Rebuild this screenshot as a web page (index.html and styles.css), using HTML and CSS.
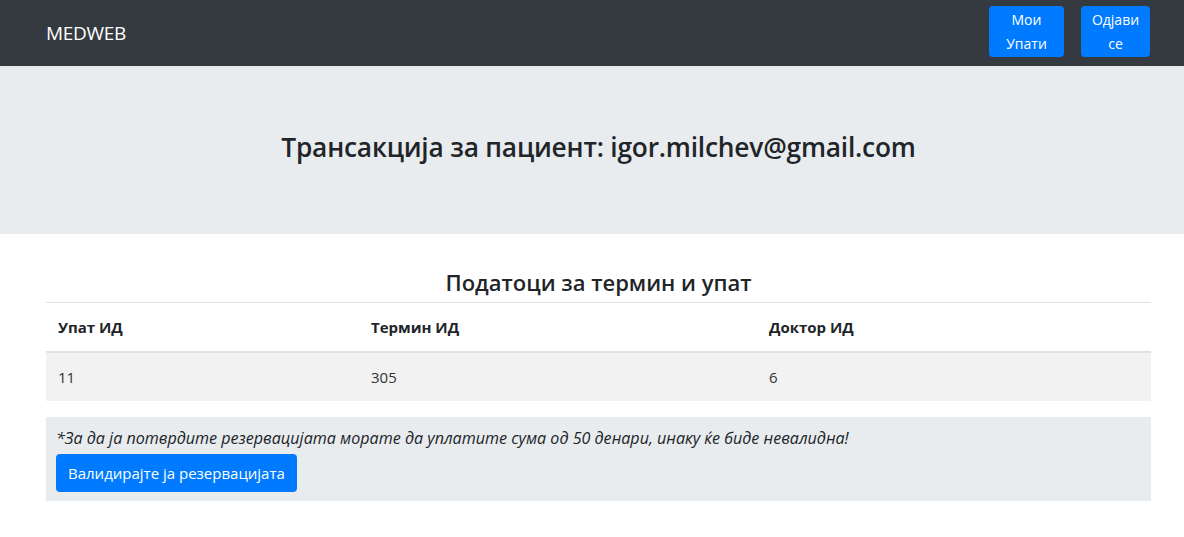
FILE: index.html
```html
<!DOCTYPE html>
<html>
<head>
  <meta charset="UTF-8" />
  <meta name="viewport" content="width=device-width,initial-scale=1.0" />
  <title>MEDWEB - Трансакција</title>
  <link rel="stylesheet" href="styles.css">
</head>
<body>

  <nav class="navbar">
    <a class="brand" href="#">MEDWEB</a>
    <div class="nav_buttons">
      <a class="btn btn_nav btn_upati" href="#">Мои<br>Упати</a>
      <a class="btn btn_nav btn_logout" href="#">Одјави<br>се</a>
    </div>
  </nav>

  <div class="jumbotron">
    <div class="container">
      <h1>Трансакција за пациент: igor.milchev@gmail.com</h1>
    </div>
  </div>

  <div class="container">
    <h2>Податоци за термин и упат</h2>

    <table class="info_table">
      <thead>
        <tr>
          <th class="col_upat">Упат ИД</th>
          <th class="col_termin">Термин ИД</th>
          <th>Доктор ИД</th>
        </tr>
      </thead>
      <tbody>
        <tr>
          <td>11</td>
          <td>305</td>
          <td>6</td>
        </tr>
      </tbody>
    </table>

    <div class="notice">
      <p><em>*За да ја потврдите резервацијата морате да уплатите сума од 50 денари, инаку ќе биде невалидна!</em></p>
      <button class="btn btn_primary">Валидирајте ја резервацијата</button>
    </div>
  </div>

</body>
</html>
```

FILE: styles.css
```css
body {
  margin: 0;
  padding: 0;
  font-family: "Open Sans", "Noto Sans", sans-serif;
  color: #212529;
  background: #fff;
}

.container {
  margin: 0 33px 0 46px;
}

/* ========================== */
/* navbar */
/* ========================== */

.navbar {
  height: 66px;
  background: #343a40;
  display: flex;
  justify-content: space-between;
  align-items: center;
  padding: 0 34px 0 46px;
}

.brand {
  color: #fff;
  text-decoration: none;
  font-size: 19px;
  letter-spacing: -0.3px;
}

.nav_buttons {
  display: flex;
  gap: 17px;
  margin-top: -3px;
}

.btn {
  display: inline-block;
  background: #007bff;
  color: #fff;
  border: none;
  border-radius: 4px;
  text-decoration: none;
  text-align: center;
  cursor: pointer;
}

.btn_nav {
  font-size: 14px;
  line-height: 24px;
  padding: 2px 0 1px;
}

.btn_upati {
  width: 75px;
}

.btn_logout {
  width: 69px;
}

/* ========================== */
/* jumbotron */
/* ========================== */

.jumbotron {
  box-sizing: border-box;
  height: 168px;
  padding-bottom: 6px;
  background: #e9ecef;
  display: flex;
  align-items: center;
}

.jumbotron .container {
  flex: 1;
}

.jumbotron h1 {
  margin: 0;
  text-align: center;
  font-size: 26.3px;
  font-weight: 600;
  letter-spacing: -0.2px;
}

/* ========================== */
/* content */
/* ========================== */

.container h2 {
  margin: 34px 0 6px;
  text-align: center;
  font-size: 22px;
  font-weight: 600;
  line-height: 28px;
}

.info_table {
  width: 100%;
  border-collapse: collapse;
  font-size: 15px;
}

.info_table th,
.info_table td {
  text-align: left;
  padding: 12px 12px;
  line-height: 24px;
}

.info_table thead th {
  border-top: 1px solid #dee2e6;
  border-bottom: 2px solid #dee2e6;
  font-weight: 700;
}

.col_upat {
  width: 289px;
}

.col_termin {
  width: 374px;
}

.info_table tbody tr {
  background: #f2f2f2;
}

.info_table tbody td {
  color: #333;
}

.notice {
  margin-top: 16px;
  background: #e9ecef;
  padding: 9px 10px 9px;
}

.notice p {
  margin: 0 0 4px;
  font-size: 16.1px;
  line-height: 24px;
}

.btn_primary {
  font-family: inherit;
  font-size: 15px;
  line-height: 24px;
  padding: 7px 12px;
}
```
